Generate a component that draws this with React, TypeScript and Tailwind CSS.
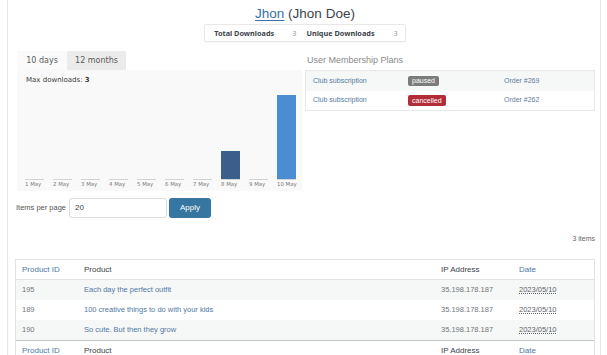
import React from "react";

const days = [
  { label: "1 May", h: 0 },
  { label: "2 May", h: 0 },
  { label: "3 May", h: 0 },
  { label: "4 May", h: 0 },
  { label: "5 May", h: 0 },
  { label: "6 May", h: 0 },
  { label: "7 May", h: 0 },
  { label: "8 May", h: 28, color: "#3a5f8b" },
  { label: "9 May", h: 0 },
  { label: "10 May", h: 84, color: "#4a8dd3" },
];

const rows = [
  { id: "195", name: "Each day the perfect outfit", ip: "35.198.178.187", date: "2023/05/10" },
  { id: "189", name: "100 creative things to do with your kids", ip: "35.198.178.187", date: "2023/05/10" },
  { id: "190", name: "So cute. But then they grow", ip: "35.198.178.187", date: "2023/05/10" },
];

const sans = { fontFamily: '"Liberation Sans", Arial, sans-serif' };
const verd = { fontFamily: '"DejaVu Sans", Verdana, sans-serif' };

function HeaderRow({ footer }: { footer?: boolean }) {
  return (
    <div
      className={
        "grid grid-cols-[62px_357px_78px_1fr] h-[20px] items-center text-[8px] bg-white " +
        (footer ? "border-t border-[#c3c4c7]" : "border-b border-[#e1e2e4]")
      }
    >
      <div className="pl-[6px] text-[#4a78a8]">Product ID</div>
      <div className="pl-[6px] text-[#3c434a]">Product</div>
      <div className="pl-[6px] text-[#3c434a]">IP Address</div>
      <div className="pl-[6px] text-[#4a78a8]">Date</div>
    </div>
  );
}

export default function App() {
  return (
    <div className="w-[607px] h-[355px] overflow-hidden bg-white" style={sans}>
      <div className="ml-[7px] w-[594px] h-full border-x border-[#e6e6e6] pl-[7px] pr-[5px]">
        {/* Title */}
        <div className="flex flex-col items-center pt-[5px]">
          <div className="text-[13.5px] leading-[18px] text-[#3c434a]">
            <span className="text-[#3a6ea5] underline underline-offset-2">Jhon</span> (Jhon Doe)
          </div>
          <div className="mt-[1px] flex items-center h-[18px] border border-[#e8e8e8] rounded-[2px] shadow-[0_1px_1px_rgba(0,0,0,0.03)] text-[7.3px] pl-[9px] pr-[7px]" style={{ fontFamily: '"Noto Sans", sans-serif' }}>
            <span className="font-bold text-[#3c434a]">Total Downloads</span>
            <span className="ml-[18px] text-[#999]">3</span>
            <span className="ml-[10px] font-bold text-[#3c434a]">Unique Downloads</span>
            <span className="ml-[19px] text-[#999]">3</span>
          </div>
        </div>

        {/* Two columns */}
        <div className="mt-[9px] flex">
          <div className="ml-[2px] w-[285px]" style={verd}>
            <div className="flex h-[19px] text-[8px] text-[#5a5a5a]">
              <div className="w-[50px] flex items-center justify-center bg-[#fafafa]">10 days</div>
              <div className="w-[59px] flex items-center justify-center bg-[#ebebeb]">12 months</div>
            </div>
            <div className="h-[121px] bg-[#f9f9f9] pt-[5px]">
              <div className="pl-[9px] text-[7px] leading-[10px] text-[#3c3c3c]">
                Max downloads: <b>3</b>
              </div>
              <div className="mt-[10px] pl-[8px] flex gap-[9px]">
                {days.map((d) => (
                  <div key={d.label} className="w-[19px] flex flex-col">
                    <div className="h-[84px] flex items-end">
                      {d.h > 0 && (
                        <div className="w-full" style={{ height: d.h, backgroundColor: d.color }} />
                      )}
                    </div>
                    <div className="h-[1px] bg-[#d4d4d4]" />
                    <div className="mt-[1px] text-[5.4px] leading-[7px] text-[#777] whitespace-nowrap">{d.label}</div>
                  </div>
                ))}
              </div>
            </div>
          </div>

          <div className="ml-[3px] flex-1">
            <div className="h-[19px] flex items-center pl-[2px] text-[9px] text-[#8a8a8a]">User Membership Plans</div>
            <div className="border border-[#e8e8e8] text-[7px]">
              <div className="grid grid-cols-[95px_96px_1fr] h-[20px] items-center bg-[#f6f7f7]">
                <div className="pl-[7px] text-[#5479a0]">Club subscription</div>
                <div className="pl-[7px]">
                  <span className="inline-block px-[4px] leading-[10px] rounded-[2px] bg-[#7b7b7b] text-white">paused</span>
                </div>
                <div className="pl-[7px] text-[#5f7d9b]">Order #269</div>
              </div>
              <div className="grid grid-cols-[95px_96px_1fr] h-[19px] items-center bg-white">
                <div className="pl-[7px] text-[#5479a0]">Club subscription</div>
                <div className="pl-[7px]">
                  <span className="inline-block px-[4px] leading-[11px] rounded-[2px] bg-[#b32d39] text-white">cancelled</span>
                </div>
                <div className="pl-[7px] text-[#5f7d9b]">Order #262</div>
              </div>
            </div>
          </div>
        </div>

        {/* Items per page */}
        <div className="mt-[7px] flex items-center pl-[1px]">
          <span className="text-[7.5px] text-[#555]">Items per page</span>
          <div className="ml-[3px] w-[98px] h-[20px] border border-[#dcdcde] rounded-[3px] flex items-center pl-[5px] text-[8px] text-[#3c434a]">20</div>
          <div className="ml-[2px] w-[42px] h-[20px] rounded-[3px] bg-[#3776a0] text-white text-[8px] flex items-center justify-center">Apply</div>
        </div>

        <div className="mt-[16px] text-right text-[7px] leading-[10px] text-[#666]">3 items</div>

        {/* Table */}
        <div className="mt-[15px] border border-[#e1e2e4]">
          <HeaderRow />
          {rows.map((r, i) => (
            <div
              key={r.id}
              className={
                "grid grid-cols-[62px_357px_78px_1fr] h-[20px] items-center text-[7.5px] " +
                (i % 2 === 0 ? "bg-[#f6f7f7]" : "bg-white")
              }
            >
              <div className="pl-[6px] text-[#72777c]">{r.id}</div>
              <div className="pl-[6px] text-[#5279a4]">{r.name}</div>
              <div className="pl-[6px] text-[#72777c]">{r.ip}</div>
              <div className="pl-[6px] text-[#5f656b] underline decoration-dotted underline-offset-1">{r.date}</div>
            </div>
          ))}
          <HeaderRow footer />
        </div>
      </div>
    </div>
  );
}
